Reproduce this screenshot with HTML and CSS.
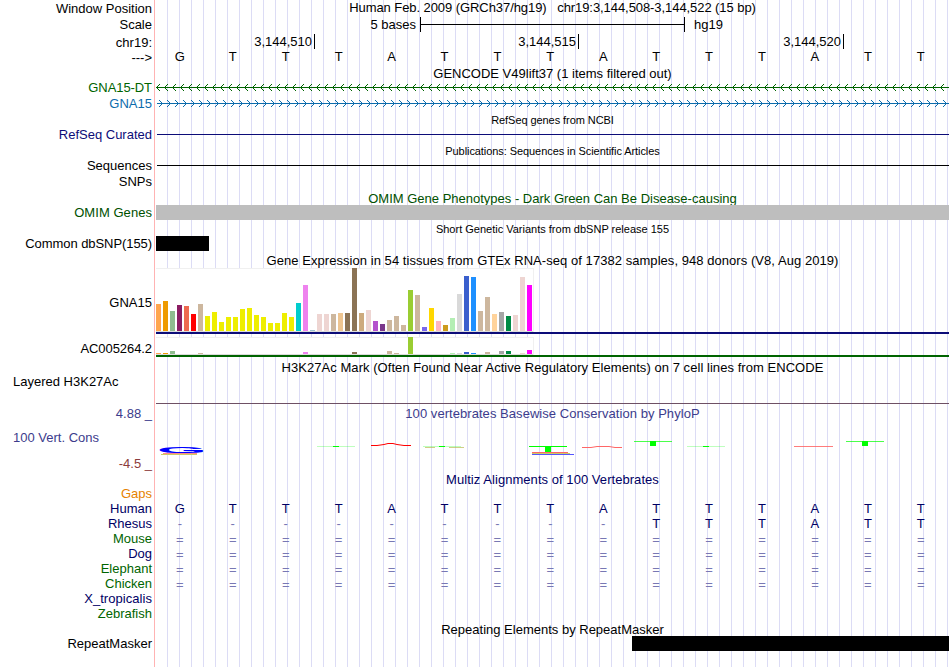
FILE: index.html
```html
<!DOCTYPE html>
<html lang="en">
<head>
  <meta charset="UTF-8" />
  <title>Human chr19:3,144,508-3,144,522</title>
  <link rel="stylesheet" href="styles.css">
</head>
<body>
  <div class="browser">
    <div class="row h16"><div class="label down">Window Position</div><div class="track title tight">Human Feb. 2009 (GRCh37/hg19) &nbsp; chr19:3,144,508-3,144,522 (15 bp)</div></div>
    <div class="row h18">
      <div class="label down">Scale</div>
      <div class="track scale"><span class="scale-size">5 bases</span><span class="scale-bar"></span><span>hg19</span></div>
    </div>
    <div class="row h16">
      <div class="label down">chr19:</div>
      <div class="track ticks"><span class="tick">3,144,510</span><span class="tick">3,144,515</span><span class="tick last">3,144,520</span></div>
    </div>
    <div class="row h16"><div class="label">---&gt;</div><div class="track bases ruler" data-bases="GTTTATTTATTTATT"></div></div>

    <div class="row h14"><div class="label"></div><div class="track title">GENCODE V49lift37 (1 items filtered out)</div></div>
    <div class="row h16">
      <div class="label green tight">GNA15-DT</div>
      <div class="track">
        <svg class="gene minus" width="793" height="15">
          <defs><pattern id="minus" width="8" height="15" patternUnits="userSpaceOnUse"><path d="M0 7h1v1h-1zM1 6h1v1h-1zM1 8h1v1h-1zM2 5h1v1h-1zM2 9h1v1h-1zM3 4h1v1h-1zM3 10h1v1h-1z"/></pattern></defs>
          <rect width="793" height="15" fill="url(#minus)"/><rect y="7" width="793" height="1"/>
        </svg>
      </div>
    </div>
    <div class="row h16">
      <div class="label blue">GNA15</div>
      <div class="track">
        <svg class="gene plus" width="793" height="15">
          <defs><pattern id="plus" width="8" height="15" patternUnits="userSpaceOnUse"><path d="M6 7h1v1h-1zM5 6h1v1h-1zM5 8h1v1h-1zM4 5h1v1h-1zM4 9h1v1h-1zM3 4h1v1h-1zM3 10h1v1h-1z"/></pattern></defs>
          <rect width="793" height="15" fill="url(#plus)"/><rect x="1" y="7" width="792" height="1"/>
        </svg>
      </div>
    </div>

    <div class="row h15"><div class="label"></div><div class="track title down small tight">RefSeq genes from NCBI</div></div>
    <div class="row h16"><div class="label navy">RefSeq Curated</div><div class="track"><div class="line navy-line"></div></div></div>
    <div class="row h15"><div class="label"></div><div class="track title down small tight">Publications: Sequences in Scientific Articles</div></div>
    <div class="row h16"><div class="label">Sequences</div><div class="track"><div class="line"></div></div></div>
    <div class="row h16"><div class="label">SNPs</div><div class="track"></div></div>

    <div class="row h15"><div class="label"></div><div class="track title down dkgreen">OMIM Gene Phenotypes - Dark Green Can Be Disease-causing</div></div>
    <div class="row h16"><div class="label dkgreen wide">OMIM Genes</div><div class="track"><div class="block omim"></div></div></div>
    <div class="row h15"><div class="label"></div><div class="track title down small">Short Genetic Variants from dbSNP release 155</div></div>
    <div class="row h16"><div class="label tight">Common dbSNP(155)</div><div class="track"><div class="block snp"></div></div></div>

    <div class="row h16"><div class="label"></div><div class="track title down wide">Gene Expression in 54 tissues from GTEx RNA-seq of 17382 samples, 948 donors (V8, Aug 2019)</div></div>
    <div class="row gtex"><div class="label">GNA15</div><div class="track"><div class="bars" data-gene="GNA15"></div><div class="model"></div></div></div>
    <div class="row gtex low"><div class="label tight">AC005264.2</div><div class="track"><div class="bars" data-gene="AC005264.2"></div><div class="model"></div></div></div>

    <div class="row h16"><div class="label"></div><div class="track title wide">H3K27Ac Mark (Often Found Near Active Regulatory Elements) on 7 cell lines from ENCODE</div></div>
    <div class="row h3k"><div class="label left">Layered H3K27Ac</div><div class="track base"></div></div>

    <div class="row h18"><div class="label cons">4.88 _</div><div class="track title cons wide">100 vertebrates Basewise Conservation by PhyloP</div></div>
    <div class="row phylop">
      <div class="label split"><span class="cons">100 Vert. Cons</span><span class="neg">-4.5 _</span></div>
      <div class="track">
        <svg class="signal" width="793" height="48" viewBox="156 424 793 48">
          <text class="logo" transform="translate(157 452.5) scale(.64 .09)">G</text>
          <path stroke="#f88" d="M163 453.5h34"/><path stroke="#cc6" d="M161 454.5h36"/>
          <g stroke="#0f0">
            <path opacity=".25" d="M317 446.5h38M687 446.5h38"/>
            <path d="M333 446.5h6M703 446.5h6M439 446.5h6"/>
            <path opacity=".25" d="M423 446.5h38"/>
            <path d="M529 446.5h38"/>
            <path opacity=".7" d="M634 441.5h38M846 441.5h38"/>
            <path stroke-width="5" d="M650 443.5h6M862 443.5h6"/>
            <path stroke-width="6" d="M545 449h6"/>
          </g>
          <path stroke="#bb5" opacity=".7" d="M425 447.5h10M449 447.5h15"/>
          <path stroke="#f00" fill="none" d="M371 445.5h6l7-1l4-1h5l4 1l7 1h7"/>
          <g stroke="#f66">
            <path d="M532 452.5h36"/><path fill="none" d="M582 447.5h9l6-1h12l6 1h7"/>
            <path opacity=".85" d="M794 446.5h39"/>
          </g>
          <path stroke="#cc6" d="M532 453.5h38"/><path stroke="#55f" d="M532 454.5h42"/>
        </svg>
      </div>
    </div>

    <div class="row h14"><div class="label"></div><div class="track title dknavy wide">Multiz Alignments of 100 Vertebrates</div></div>
    <div class="row h15"><div class="label orange">Gaps</div><div class="track"></div></div>
    <div class="row h15"><div class="label dknavy">Human</div><div class="track bases" data-bases="GTTTATTTATTTATT"></div></div>
    <div class="row h15"><div class="label dknavy">Rhesus</div><div class="track bases" data-bases="---------TTTATT"></div></div>
    <div class="row h15"><div class="label green">Mouse</div><div class="track bases down" data-bases="==============="></div></div>
    <div class="row h15"><div class="label dknavy">Dog</div><div class="track bases down" data-bases="==============="></div></div>
    <div class="row h15"><div class="label green">Elephant</div><div class="track bases down" data-bases="==============="></div></div>
    <div class="row h15"><div class="label green">Chicken</div><div class="track bases down" data-bases="==============="></div></div>
    <div class="row h15"><div class="label dknavy wide">X_tropicalis</div><div class="track"></div></div>
    <div class="row h15"><div class="label green">Zebrafish</div><div class="track"></div></div>
    <div class="row h15"><div class="label"></div><div class="track title down">Repeating Elements by RepeatMasker</div></div>
    <div class="row h15"><div class="label">RepeatMasker</div><div class="track"><div class="block rmsk"></div></div></div>
  </div>
  <script src="script.js"></script>
</body>
</html>
```

FILE: styles.css
```css
body {
  margin: 0;
  background: #fff;
  font-family: "Liberation Sans", Arial, sans-serif;
  font-size: 13px;
  color: #000;
}
.browser {
  width: 949px;
  height: 667px;
  overflow: hidden;
  background:
    linear-gradient(#ffb3b3, #ffb3b3) 154px 0 / 1px 100% no-repeat,
    repeating-linear-gradient(90deg, transparent 0 11px, #dcdcf5 11px 12px) 156px 0 / 793px 100% no-repeat;
}
.row {
  display: flex;
  line-height: 15px;
  white-space: nowrap;
}
.h14 { height: 14px; }
.h15 { height: 15px; }
.h16 { height: 16px; }
.h18 { height: 18px; }
.label {
  width: 152px;
  margin-right: 4px;
  text-align: right;
}
.down { padding-top: 1px; }
.track { width: 793px; }
.title { text-align: center; }
.small { font-size: 11px; }
.tight { letter-spacing: -0.07px; }
.wide { letter-spacing: 0.05px; }

.green { color: #006400; }
.dkgreen { color: #005000; }
.blue { color: #0c6cac; }
.navy { color: #0c0c78; }
.dknavy { color: #000064; }
.orange { color: #e68200; }
.cons { color: #3c3c8c; }
.neg { color: #8c3c3c; }

/* ruler */
.scale {
  display: flex;
  line-height: 17px;
}
.scale-size {
  width: 260px;
  text-align: right;
  margin-right: 4px;
}
.scale-bar {
  width: 263px;
  height: 15px;
  margin: 1px 9px 0 0;
  border: solid #000;
  border-width: 0 1px;
  background: linear-gradient(#000, #000) 0 7px / 100% 1px no-repeat;
}
.ticks { display: flex; }
.tick {
  box-sizing: border-box;
  width: 264px;
  height: 15px;
  padding-right: 2px;
  border-right: 1px solid #000;
  text-align: right;
  line-height: 16px;
}
.tick:first-child { width: 159px; }
.tick.last { width: 265px; }
.bases {
  display: grid;
  grid-template-columns: repeat(15, 52.93px);
  margin-left: -2.6px;
  text-align: center;
  color: #000064;
}
.ruler {
  color: #000;
  line-height: 13px;
}
.gap { color: #7878b4; }

/* items */
.gene {
  display: block;
  shape-rendering: crispEdges;
}
.minus { fill: #006400; }
.plus { fill: #0c6cac; }
.line {
  height: 1px;
  margin: 7px 0 0 1px;
  background: #000;
}
.navy-line { background: #0c0c78; }
.block {
  height: 15px;
  background: #000;
}
.omim { background: #bebebe; }
.snp { width: 53px; }
.rmsk { margin-left: 476px; }

/* expression */
.gtex {
  height: 69px;
  line-height: 69px;
}
.bars {
  box-sizing: border-box;
  display: flex;
  align-items: flex-end;
  gap: 2px;
  width: 378px;
  height: 64px;
  background: #fff;
  box-shadow: inset -1px 1px #f0f0f0, inset 0 -1px #dcdcdc;
  padding-bottom: 1px;
}
.bar { width: 5px; }
.model {
  height: 2px;
  background: #0c0c78;
}
.low {
  height: 23px;
  line-height: 23px;
}
.low .bars { height: 18px; }
.low .model { background: #006400; }

/* signal tracks */
.left {
  box-sizing: border-box;
  padding-left: 13px;
  text-align: left;
  line-height: 11px;
}
.h3k {
  height: 30px;
}
.base {
  height: 27px;
  border-bottom: 1px solid #6e5064;
}
.phylop { height: 48px; }
.signal { display: block; }
.split {
  display: flex;
  flex-direction: column;
  justify-content: space-between;
  height: 47px;
}
.split .cons {
  padding: 6px 0 0 13px;
  text-align: left;
}
.logo {
  font-size: 100px;
  font-weight: bold;
  fill: #00f;
}
```

FILE: script.js
```js
const colors = [
  "#ffa54f", "#ee9a00", "#8fbc8f", "#8b1c62", "#ee6a50", "#ff0000", "#cdb79e",
  "#eeee00", "#eeee00", "#eeee00", "#eeee00", "#eeee00", "#eeee00", "#eeee00", "#eeee00",
  "#eeee00", "#eeee00", "#eeee00", "#eeee00", "#eeee00", "#00cdcd", "#ee82ee", "#9ac0cd",
  "#eed5d2", "#eed5d2", "#cdb79e", "#eec591", "#8b7355", "#8b7355", "#cdaa7d", "#eed5d2",
  "#b452cd", "#7a378b", "#cdb79e", "#cdb79e", "#cdb79e", "#9acd32", "#cdb79e", "#7a67ee",
  "#ffd700", "#ffb6c1", "#cd9b1d", "#b4eeb4", "#d9d9d9", "#3a5fcd", "#1e90ff", "#cdb79e",
  "#cdb79e", "#ffd39b", "#a6a6a6", "#008b45", "#eed5d2", "#eed5d2", "#ff00ff"
];
const expression = {
  "GNA15": [27, 30, 20, 26, 25, 17, 27, 15, 19, 9, 14, 14, 22, 23, 16, 14, 8, 8, 18, 14, 28, 46, 1, 17, 17, 17, 18,
    18, 63, 18, 21, 10, 7, 11, 15, 6, 41, 36, 4, 23, 10, 6, 13, 37, 55, 54, 20, 34, 17, 19, 15, 16, 54, 46],
  "AC005264.2": [1, 1, 3, 0, 0, 0, 1, 0, 0, 0, 0, 0, 0, 0, 0, 0, 0, 0, 0, 0, 0, 2, 0, 0, 0, 0, 0,
    0, 2, 0, 0, 0, 0, 3, 1, 0, 17, 0, 0, 0, 0, 0, 1, 1, 2, 1, 0, 2, 0, 3, 3, 0, 1, 4]
};

document.querySelectorAll(".bars").forEach(el => {
  expression[el.dataset.gene].forEach((height, i) => {
    const bar = document.createElement("div");
    bar.className = "bar";
    bar.style.height = height + "px";
    bar.style.background = colors[i];
    el.appendChild(bar);
  });
});

document.querySelectorAll(".bases").forEach(el => {
  for (const base of el.dataset.bases) {
    const cell = document.createElement("span");
    if (base === "-" || base === "=") cell.className = "gap";
    cell.textContent = base;
    el.appendChild(cell);
  }
});
```
